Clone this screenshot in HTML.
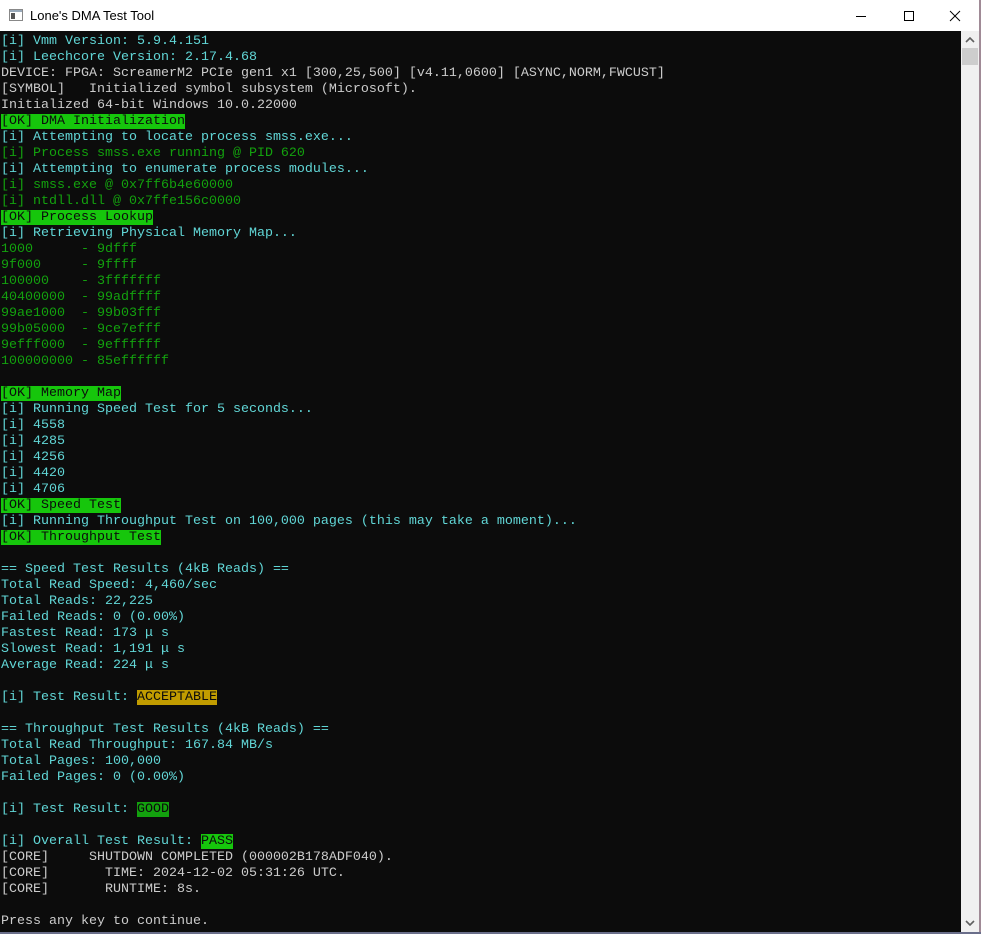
<!DOCTYPE html>
<html><head><meta charset="utf-8"><style>
html,body{margin:0;padding:0;width:981px;height:934px;overflow:hidden;background:#fff;}
#tb{position:absolute;left:0;top:0;width:981px;height:31px;background:#fff;}
#title{position:absolute;left:30px;top:8px;font:13px "Liberation Sans",sans-serif;color:#000;}
#con{position:absolute;left:0;top:31px;width:961px;height:901px;background:#0c0c0c;}
#sb{position:absolute;left:961px;top:31px;width:18px;height:901px;background:#f0f0f0;}
#rb{position:absolute;left:979px;top:0;width:2px;height:934px;background:#a08a96;}
#bb{position:absolute;left:0;top:932px;width:981px;height:2px;background:#6a6e8a;}
pre{margin:0;position:absolute;left:1px;top:34px;font:13.33px/16px "Liberation Mono","Noto Sans CJK SC",monospace;color:#cccccc;white-space:pre;}
.c{color:#61d6d6}.g{color:#13a10e}
.ok{background:#16c60c;color:#0c0c0c}
.ac{background:#c19c00;color:#0c0c0c}
.gd{background:#13a10e;color:#0c0c0c}
.mu{display:inline-block;width:16px;}
</style></head><body>
<div id="tb">
<svg style="position:absolute;left:9px;top:9px" width="14" height="12"><rect x="0.5" y="0.5" width="13" height="11" fill="#fff" stroke="#888"/><rect x="1" y="1" width="12" height="2" fill="#9ab"/><rect x="2" y="4" width="4" height="6" fill="#555"/></svg>
<div id="title">Lone's DMA Test Tool</div>
<svg style="position:absolute;left:856px;top:9px" width="110" height="14">
<line x1="0" y1="7.5" x2="10" y2="7.5" stroke="#000"/>
<rect x="48.5" y="2.5" width="9" height="9" fill="none" stroke="#000"/>
<line x1="94" y1="2" x2="104" y2="12" stroke="#000"/><line x1="104" y1="2" x2="94" y2="12" stroke="#000"/>
</svg>
</div>
<div id="con"></div>
<div id="sb">
<svg style="position:absolute;left:4px;top:6px" width="10" height="6"><path d="M1 5 L5 1 L9 5" fill="none" stroke="#606060" stroke-width="1.6"/></svg>
<div style="position:absolute;left:1px;top:17px;width:16px;height:17px;background:#cdcdcd"></div>
<svg style="position:absolute;left:4px;top:889px" width="10" height="6"><path d="M1 1 L5 5 L9 1" fill="none" stroke="#606060" stroke-width="1.6"/></svg>
</div>
<div id="rb"></div><div id="bb"></div>
<pre><span class="c">[i] Vmm Version: 5.9.4.151
[i] Leechcore Version: 2.17.4.68</span>
DEVICE: FPGA: ScreamerM2 PCIe gen1 x1 [300,25,500] [v4.11,0600] [ASYNC,NORM,FWCUST]
[SYMBOL]   Initialized symbol subsystem (Microsoft).
Initialized 64-bit Windows 10.0.22000
<span class="ok">[OK] DMA Initialization</span>
<span class="c">[i] Attempting to locate process smss.exe...</span>
<span class="g">[i] Process smss.exe running @ PID 620</span>
<span class="c">[i] Attempting to enumerate process modules...</span>
<span class="g">[i] smss.exe @ 0x7ff6b4e60000
[i] ntdll.dll @ 0x7ffe156c0000</span>
<span class="ok">[OK] Process Lookup</span>
<span class="c">[i] Retrieving Physical Memory Map...</span>
<span class="g">1000      - 9dfff
9f000     - 9ffff
100000    - 3fffffff
40400000  - 99adffff
99ae1000  - 99b03fff
99b05000  - 9ce7efff
9efff000  - 9effffff
100000000 - 85effffff</span>

<span class="ok">[OK] Memory Map</span>
<span class="c">[i] Running Speed Test for 5 seconds...
[i] 4558
[i] 4285
[i] 4256
[i] 4420
[i] 4706</span>
<span class="ok">[OK] Speed Test</span>
<span class="c">[i] Running Throughput Test on 100,000 pages (this may take a moment)...</span>
<span class="ok">[OK] Throughput Test</span>

<span class="c">== Speed Test Results (4kB Reads) ==
Total Read Speed: 4,460/sec
Total Reads: 22,225
Failed Reads: 0 (0.00%)
Fastest Read: 173 <span class="mu">μ</span>s
Slowest Read: 1,191 <span class="mu">μ</span>s
Average Read: 224 <span class="mu">μ</span>s

[i] Test Result: </span><span class="ac">ACCEPTABLE</span>

<span class="c">== Throughput Test Results (4kB Reads) ==
Total Read Throughput: 167.84 MB/s
Total Pages: 100,000
Failed Pages: 0 (0.00%)

[i] Test Result: </span><span class="gd">GOOD</span>

<span class="c">[i] Overall Test Result: </span><span class="ok">PASS</span>
[CORE]     SHUTDOWN COMPLETED (000002B178ADF040).
[CORE]       TIME: 2024-12-02 05:31:26 UTC.
[CORE]       RUNTIME: 8s.

Press any key to continue.</pre>
</body></html>
